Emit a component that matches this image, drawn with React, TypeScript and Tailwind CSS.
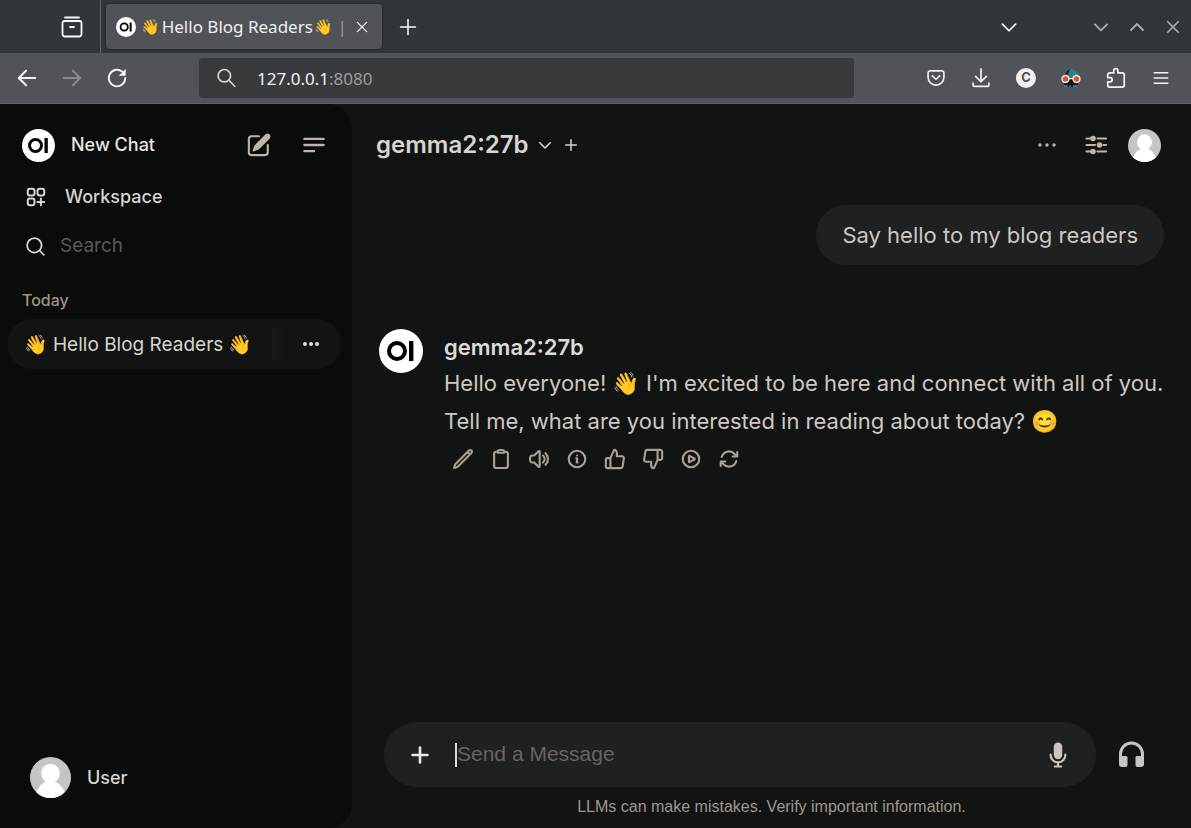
import type { ReactNode } from "react";

type IconProps = { className?: string; d: string | string[]; box?: number; width?: number };

function Stroke({ className = "size-6", d, box = 24, width = 2 }: IconProps) {
  const paths = Array.isArray(d) ? d : [d];
  return (
    <svg className={className} viewBox={`0 0 ${box} ${box}`} fill="none" stroke="currentColor" strokeWidth={width} strokeLinecap="round" strokeLinejoin="round" aria-hidden="true">
      {paths.map((p) => <path key={p} d={p} />)}
    </svg>
  );
}

function Solid({ className = "size-6", d, box = 20 }: IconProps) {
  const paths = Array.isArray(d) ? d : [d];
  return (
    <svg className={className} viewBox={`0 0 ${box} ${box}`} fill="currentColor" fillRule="evenodd" aria-hidden="true">
      {paths.map((p) => <path key={p} d={p} />)}
    </svg>
  );
}

function Logo({ className }: { className: string }) {
  return (
    <svg className={className} viewBox="0 0 44 44" aria-hidden="true">
      <circle cx="22" cy="22" r="22" fill="#fff" />
      <circle cx="18" cy="22" r="8" fill="none" stroke="#000" strokeWidth="4" />
      <rect x="30" y="12" width="4.4" height="20" fill="#000" />
    </svg>
  );
}

function Avatar({ className }: { className: string }) {
  return (
    <svg className={`rounded-full ${className}`} viewBox="0 0 40 40" aria-hidden="true">
      <rect width="40" height="40" fill="#c5c5c5" />
      <ellipse cx="20" cy="16" rx="9" ry="9.5" fill="#fff" />
      <path d="M6 35c2-6 6-9.500 9-10.500h10c3 1 7 4.500 9 10.500v5H6z" fill="#fff" />
    </svg>
  );
}

function IconButton({ label, className = "", children }: { label: string; className?: string; children: ReactNode }) {
  return (
    <button type="button" aria-label={label} className={`flex shrink-0 items-center justify-center ${className}`}>
      {children}
    </button>
  );
}

const CHEVRON_DOWN = "M4 8.500l8 8 8-8";
const SEARCH = "M9 3.5a5.5 5.5 0 100 11 5.5 5.5 0 000-11zM2 9a7 7 0 1112.452 4.391l3.328 3.329a.75.75 0 11-1.06 1.06l-3.329-3.328A7 7 0 012 9z";
const CIRCLE = "M21 12a9 9 0 1 1-18 0 9 9 0 0 1 18 0Z";

const actions = [
  { label: "Edit", d: "M16.862 4.487l1.687-1.688a1.875 1.875 0 112.652 2.652L6.832 19.82a4.5 4.5 0 01-1.897 1.13l-2.685.8.8-2.685a4.5 4.5 0 011.13-1.897L16.863 4.487zm0 0L19.5 7.125" },
  { label: "Copy", d: "M15.666 3.888A2.25 2.25 0 0013.5 2.25h-3c-1.03 0-1.9.693-2.166 1.638m7.332 0c.055.194.084.4.084.612v0a.75.75 0 01-.75.75H9a.75.75 0 01-.75-.75v0c0-.212.03-.418.084-.612m7.332 0c.646.049 1.288.11 1.927.184 1.1.128 1.907 1.077 1.907 2.185V19.5a2.25 2.25 0 01-2.25 2.25H6.75A2.25 2.25 0 014.5 19.5V6.257c0-1.108.806-2.057 1.907-2.185a48.208 48.208 0 011.927-.184" },
  { label: "Read aloud", d: "M19.114 5.636a9 9 0 010 12.728M16.463 8.288a5.25 5.25 0 010 7.424M6.75 8.25l4.72-4.72a.75.75 0 011.28.53v15.88a.75.75 0 01-1.28.53l-4.72-4.72H4.51c-.88 0-1.704-.507-1.938-1.354A9.01 9.01 0 012.25 12c0-.83.112-1.633.322-2.396C2.806 8.756 3.63 8.25 4.51 8.25H6.75z" },
  { label: "Generation info", d: [CIRCLE, "M11.25 11.25l.041-.02a.75.75 0 011.063.852l-.708 2.836a.75.75 0 001.063.853l.041-.021M12 8.250h.008v.008H12V8.25z"] },
  { label: "Good response", d: "M14 9V5a3 3 0 0 0-3-3l-4 9v11h11.28a2 2 0 0 0 2-1.7l1.38-9a2 2 0 0 0-2-2.3zM7 22H4a2 2 0 0 1-2-2v-7a2 2 0 0 1 2-2h3" },
  { label: "Bad response", d: "M10 15v4a3 3 0 0 0 3 3l4-9V2H5.72a2 2 0 0 0-2 1.7l-1.38 9a2 2 0 0 0 2 2.3zm7-13h2.67A2.31 2.31 0 0 1 22 4v7a2.31 2.31 0 0 1-2.33 2H17" },
  { label: "Continue response", d: [CIRCLE, "M15.91 11.672a.375.375 0 0 1 0 .656l-5.603 3.113a.375.375 0 0 1-.557-.328V8.887c0-.286.307-.466.557-.327l5.603 3.112Z"] },
  { label: "Regenerate", d: "M16.023 9.348h4.992v-.001M2.985 19.644v-4.992m0 0h4.992m-4.993 0l3.181 3.183a8.25 8.25 0 0013.803-3.7M4.031 9.865a8.25 8.25 0 0113.803-3.7l3.181 3.182m0-4.991v4.99" },
];

function TabStrip() {
  return (
    <div className="flex h-[53px] items-center bg-[#31363a] text-[#fbfbfe]">
      <div className="flex h-full w-[101px] shrink-0 items-center justify-end border-r border-[#65696c] pr-4">
        <IconButton label="View recent browsing" className="size-6">
          <Stroke className="size-6" width={1.8} d={["M5 2.500h14", "M4.500 6h15a2 2 0 0 1 2 2v11a2.500 2.500 0 0 1-2.500 2.500H5A2.500 2.500 0 0 1 2.500 19V8a2 2 0 0 1 2-2z", "M10 12h4"]} />
        </IconButton>
      </div>
      <div className="ml-[5px] flex h-[45px] w-[276px] shrink-0 items-center rounded bg-[#4f5257] pr-2 pl-2.5 shadow-[0_0_3px_#00000080]">
        <Logo className="size-5 shrink-0" />
        <span className="ml-[5px] flex flex-1 items-center gap-0.5 font-['Noto_Sans','Noto_Color_Emoji',sans-serif] text-[17px] whitespace-nowrap text-[#f0f0f2]">
          <span className="text-[15px]">👋</span>
          Hello Blog Readers
          <span className="text-[15px]">👋</span>
          <span className="ml-0.5 text-[#96989b]">|</span>
        </span>
        <IconButton label="Close tab" className="size-6">
          <Stroke className="size-3.5" width={2} d="M4 4l16 16M20 4L4 20" />
        </IconButton>
      </div>
      <IconButton label="New tab" className="ml-3.5 size-6">
        <Stroke className="size-[18px]" width={2} d="M12 2v20M2 12h20" />
      </IconButton>
      <div className="ml-auto flex items-center">
        <IconButton label="List all tabs" className="mr-16 size-7">
          <Stroke className="size-5" width={2} d={CHEVRON_DOWN} />
        </IconButton>
        <div className="flex items-center gap-2 pr-1 text-[#a9acae]">
          <IconButton label="Minimize" className="size-7">
            <Stroke className="size-[18px]" width={2.500} d={CHEVRON_DOWN} />
          </IconButton>
          <IconButton label="Maximize" className="size-7">
            <Stroke className="size-[18px]" width={2.500} d="M4 16l8-8 8 8" />
          </IconButton>
          <IconButton label="Close window" className="size-7">
            <Stroke className="size-3.5" width={3} d="M3 3l18 18M21 3L3 21" />
          </IconButton>
        </div>
      </div>
    </div>
  );
}

function Toolbar() {
  return (
    <div className="flex h-[51px] items-center border-b border-[#5f6266] bg-[#505358] text-[#f4f4f6]">
      <div className="flex w-[199px] shrink-0 items-center gap-[17px] pl-[13px]">
        <IconButton label="Back" className="size-7">
          <Stroke className="size-[22px]" width={2.200} d="M21 12H3M11 4l-8 8 8 8" />
        </IconButton>
        <IconButton label="Forward" className="size-7 text-[#898b8f]">
          <Stroke className="size-[22px]" width={2.200} d="M3 12h18M13 4l8 8-8 8" />
        </IconButton>
        <IconButton label="Reload" className="size-7">
          <svg className="size-[22px]" viewBox="0 0 24 24" fill="none" stroke="currentColor" strokeWidth="2" strokeLinecap="round" aria-hidden="true">
            <path d="M21 12a9 9 0 1 1-3.500-7.100" />
            <path d="M21.500 2v7.500H14z" fill="currentColor" stroke="none" />
          </svg>
        </IconButton>
      </div>
      <div className="flex h-10 w-[655px] min-w-0 shrink items-center rounded bg-[#383b3d] pl-4">
        <Stroke className="size-[22px] shrink-0 text-[#d5d6d8]" width={1.800} d={["M17 9.500a6.800 6.800 0 1 1-13.600 0 6.800 6.800 0 0 1 13.600 0z", "M15.200 14.500l6.300 6.500"]} />
        <span className="ml-5 pt-px font-['Noto_Sans',sans-serif] text-[17px]">127.0.0.1<span className="text-[#9a9c9f]">:8080</span></span>
      </div>
      <div className="ml-auto flex items-center gap-[17px] pr-4">
        <IconButton label="Save to Pocket" className="size-7">
          <Stroke className="size-5" width={2} d={["M5 3.500h14a2.500 2.500 0 0 1 2.500 2.500v5a9.500 9.500 0 0 1-19 0V6A2.500 2.500 0 0 1 5 3.500z", "M7.500 9.500l4.500 4 4.500-4"]} />
        </IconButton>
        <IconButton label="Downloads" className="size-7">
          <Stroke className="size-5" width={2} d={["M12 1v15", "M5.500 10l6.500 6.500 6.500-6.500", "M2.500 18v2a2 2 0 0 0 2 2h15a2 2 0 0 0 2-2v-2"]} />
        </IconButton>
        <IconButton label="Account" className="size-7">
          <span className="flex size-5 items-center justify-center rounded-full bg-[#f0f0f1] font-['Inter',sans-serif] text-[13px] font-bold text-[#505358]">C</span>
        </IconButton>
        <IconButton label="Privacy extension" className="size-7">
          <svg className="size-5" viewBox="0 0 20 20" aria-hidden="true">
            <path d="M2 10C2 4.500 5.500 1 10 1s8 3.500 8 9z" fill="#2a7f94" />
            <path d="M3.500 7c.8-3 3-5 5.500-5.700L6.500 7z" fill="#17212b" />
            <path d="M3 9.500h14V19H3z" fill="#11151a" />
            <path d="M3 17h3.500v2H3zM8 17.500h2v1.500H8zM12 17h5v2h-5z" fill="#2a7f94" />
            <circle cx="4.500" cy="11" r="3.400" fill="#df5230" stroke="#f5e6de" strokeWidth="1.500" />
            <circle cx="15.500" cy="11" r="3.400" fill="#df5230" stroke="#f5e6de" strokeWidth="1.500" />
            <path d="M8 10.500h4" stroke="#f5e6de" strokeWidth="1.500" />
          </svg>
        </IconButton>
        <IconButton label="Extensions" className="size-7">
          <Stroke className="size-[22px]" width={1.900} d="M5 6.500h4.500V4a2.300 2.300 0 0 1 4.600 0v2.500H19a2 2 0 0 1 2 2V20a2 2 0 0 1-2 2H5a2 2 0 0 1-2-2v-3.700h2.500a2.300 2.300 0 0 0 0-4.600H3V8.500a2 2 0 0 1 2-2z" />
        </IconButton>
        <IconButton label="Menu" className="size-7">
          <Stroke className="size-[18px]" width={2} d="M3 5h18M3 12h18M3 19h18" />
        </IconButton>
      </div>
    </div>
  );
}

function Sidebar() {
  return (
    <aside className="flex w-[352px] shrink-0 flex-col rounded-r-3xl bg-[#0a0b0b] font-['Inter','Noto_Color_Emoji',sans-serif] text-[#d8d4cf]">
      <div className="mt-5 flex h-[42px] items-center pr-6 pl-[22px]">
        <a href="#new" className="flex flex-1 items-center gap-4 text-lg font-medium text-[#e8e6e3]">
          <Logo className="size-[33px]" />
          New Chat
        </a>
        <IconButton label="New chat" className="mr-[27px] size-7 text-[#bdb5ab]">
          <Solid className="size-7" d={["M5.433 13.917l1.262-3.155A4 4 0 017.58 9.42l6.92-6.918a2.121 2.121 0 013 3l-6.92 6.918c-.383.383-.84.685-1.343.886l-3.154 1.262a.5.5 0 01-.65-.65z", "M3.5 5.75c0-.69.56-1.25 1.25-1.25H10A.75.75 0 0010 3H4.75A2.75 2.75 0 002 5.75v9.500A2.75 2.75 0 004.75 18h9.500A2.75 2.75 0 0017 15.25V10a.75.75 0 00-1.500 0v5.250c0 .69-.56 1.250-1.250 1.250h-9.500c-.69 0-1.250-.56-1.250-1.250v-9.500z"]} />
        </IconButton>
        <IconButton label="Toggle sidebar" className="size-7 text-[#bdb5ab]">
          <Stroke className="size-7" width={2} d="M3.75 6.75h16.500M3.75 12h16.500m-16.500 5.250H12" />
        </IconButton>
      </div>
      <a href="#workspace" className="mt-[11px] flex h-10 items-center gap-[17px] pl-6 text-lg font-medium">
        <Stroke className="size-6" width={2} d="M13.500 16.875h3.375m0 0h3.375m-3.375 0V13.500m0 3.375v3.375M6 10.500h2.250a2.250 2.250 0 002.250-2.250V6a2.250 2.250 0 00-2.250-2.250H6A2.250 2.250 0 003.750 6v2.250A2.250 2.250 0 006 10.500zm0 9.750h2.250A2.250 2.250 0 0010.500 18v-2.250a2.250 2.250 0 00-2.250-2.250H6a2.250 2.250 0 00-2.250 2.250V18A2.250 2.250 0 006 20.250zm9.750-9.750H18a2.250 2.250 0 002.250-2.250V6A2.250 2.250 0 0018 3.750h-2.250A2.250 2.250 0 0013.500 6v2.250a2.250 2.250 0 002.250 2.250z" />
        Workspace
      </a>
      <label className="mt-[9px] flex h-10 items-center gap-[13px] pl-6">
        <Solid className="size-[23px] shrink-0" d={SEARCH} />
        <input type="search" aria-label="Search" placeholder="Search" className="w-full min-w-0 bg-transparent text-[19px] outline-none placeholder:text-[#5c5751]" />
      </label>
      <h2 className="mt-[22px] pl-[22px] text-base leading-6 font-medium text-[#9d9488]">Today</h2>
      <div className="mt-[7px] mr-[11px] ml-2 flex h-[50px] items-center rounded-3xl bg-[#121414] px-4">
        <a href="#chat" className="flex-1 truncate pt-0.5 text-[19px]">👋 Hello Blog Readers 👋</a>
        <span className="mr-[13px] h-8 w-3 bg-linear-to-r from-[#1a1b1d] to-[#121414]" />
        <IconButton label="Chat menu" className="size-7 text-[#e0dcd7]">
          <svg className="size-5" viewBox="0 0 20 20" fill="currentColor" aria-hidden="true"><circle cx="4" cy="10" r="2" /><circle cx="10" cy="10" r="2" /><circle cx="16" cy="10" r="2" /></svg>
        </IconButton>
      </div>
      <button type="button" className="mt-auto mb-[30px] flex items-center gap-4 pl-[30px] text-lg font-medium">
        <Avatar className="size-[41px]" />
        User
      </button>
    </aside>
  );
}

function Header() {
  return (
    <header className="flex h-[82px] items-center pr-[30px] pl-6 text-[#d8d4cf]">
      <button type="button" className="flex items-center gap-[9px] font-['Inter',sans-serif] text-2xl font-semibold">
        gemma2:27b
        <Stroke className="size-3.5" width={2.600} d="M3 8l9 9 9-9" />
      </button>
      <IconButton label="Add model" className="ml-[7px] size-6">
        <Stroke className="size-3.5" width={2.600} d="M12 3v18M3 12h18" />
      </IconButton>
      <div className="ml-auto flex items-center text-[#bdb5ab]">
        <IconButton label="More" className="mr-[21px] size-7">
          <svg className="size-5" viewBox="0 0 20 20" fill="currentColor" aria-hidden="true"><circle cx="3" cy="10" r="1.700" /><circle cx="10" cy="10" r="1.700" /><circle cx="17" cy="10" r="1.700" /></svg>
        </IconButton>
        <IconButton label="Controls" className="mr-[18px] size-7">
          <svg className="size-7" viewBox="0 0 28 28" stroke="currentColor" strokeWidth="2.200" strokeLinecap="round" fill="currentColor" aria-hidden="true">
            <path d="M4.500 7.500h5M15.500 7.500h8.500M4.500 14h8.500M21.500 14h2.500M4.500 20.500h5M15.500 20.500h8.500" />
            <circle cx="11" cy="7.500" r="1.700" /><circle cx="17.500" cy="14" r="1.700" /><circle cx="11" cy="20.500" r="1.700" />
          </svg>
        </IconButton>
        <IconButton label="User menu">
          <Avatar className="size-[33px]" />
        </IconButton>
      </div>
    </header>
  );
}

function Messages() {
  return (
    <div className="flex flex-1 flex-col pr-3 pl-[27px] font-['Inter','Noto_Color_Emoji',sans-serif] text-[22px] text-[#cdc8c2]">
      <p className="mt-[19px] mr-[15px] self-end rounded-full bg-[#1f2022] px-[26px] py-[11px] leading-[38px]">Say hello to my blog readers</p>
      <article className="mt-16 flex">
        <Logo className="size-11 shrink-0" />
        <div className="ml-[21px] min-w-0">
          <h3 className="pt-px leading-[34px] font-semibold text-[#dedbd7]">gemma2:27b</h3>
          <p className="leading-[38px]">
            Hello everyone! 👋 I'm excited to be here and connect with all of you.
            <br />
            Tell me, what are you interested in reading about today? 😊
          </p>
          <div className="mt-[5px] flex gap-2.5 pl-[5px] text-[#aaa195]">
            {actions.map((a) => (
              <IconButton key={a.label} label={a.label} className="size-7">
                <Stroke className="size-[22px]" width={2.300} d={a.d} />
              </IconButton>
            ))}
          </div>
        </div>
      </article>
    </div>
  );
}

function Composer() {
  return (
    <footer className="font-['Liberation_Sans',sans-serif]">
      <form className="flex items-center pr-9 pl-8">
        <div className="flex h-[65px] flex-1 items-center rounded-full bg-[#1f2022] pr-6 pl-[22px]">
          <IconButton label="Attach" className="size-7 text-[#e8e6e3]">
            <Solid className="size-7" box={16} d="M8.750 3.750a.75.75 0 0 0-1.500 0v3.500h-3.500a.75.75 0 0 0 0 1.500h3.500v3.500a.75.75 0 0 0 1.500 0v-3.500h3.500a.75.75 0 0 0 0-1.500h-3.500v-3.500Z" />
          </IconButton>
          <span className="ml-[21px] h-6 w-0.5 bg-[#dedbd7]" />
          <input aria-label="Send a Message" placeholder="Send a Message" className="min-w-0 flex-1 bg-transparent pb-px text-[21px] text-[#dedbd7] outline-none placeholder:text-[#69645d]" />
          <IconButton label="Record voice" className="size-7 text-[#cbc5be]">
            <Solid className="size-7" d={["M7 4a3 3 0 016 0v6a3 3 0 11-6 0V4z", "M5.500 9.643a.75.75 0 00-1.500 0V10c0 3.060 2.290 5.585 5.250 5.954V17.500h-1.500a.75.75 0 000 1.500h4.500a.75.75 0 000-1.500h-1.500v-1.546A6.001 6.001 0 0016 10v-.357a.75.75 0 00-1.500 0V10a4.500 4.500 0 01-9 0v-.357z"]} />
          </IconButton>
        </div>
        <IconButton label="Call" className="ml-[11px] size-12 text-[#cbc5be]">
          <svg className="size-[27px]" viewBox="0 0 27 27" fill="currentColor" aria-hidden="true">
            <path d="M2.500 16v-3a11 11 0 0 1 22 0v3" fill="none" stroke="currentColor" strokeWidth="3" />
            <path d="M1 15h7a1.500 1.500 0 0 1 1.500 1.500V24A2 2 0 0 1 7.500 26H4a3 3 0 0 1-3-3zM26 15h-7a1.500 1.500 0 0 0-1.500 1.500V24a2 2 0 0 0 2 2H23a3 3 0 0 0 3-3z" />
          </svg>
        </IconButton>
      </form>
      <p className="mt-2 mb-[9px] text-center text-base leading-6 text-[#a0978b]">LLMs can make mistakes. Verify important information.</p>
    </footer>
  );
}

export default function App() {
  return (
    <div className="flex min-h-screen flex-col bg-[#121414]">
      <TabStrip />
      <Toolbar />
      <div className="flex flex-1">
        <Sidebar />
        <main className="flex min-w-0 flex-1 flex-col">
          <Header />
          <Messages />
          <Composer />
        </main>
      </div>
    </div>
  );
}
